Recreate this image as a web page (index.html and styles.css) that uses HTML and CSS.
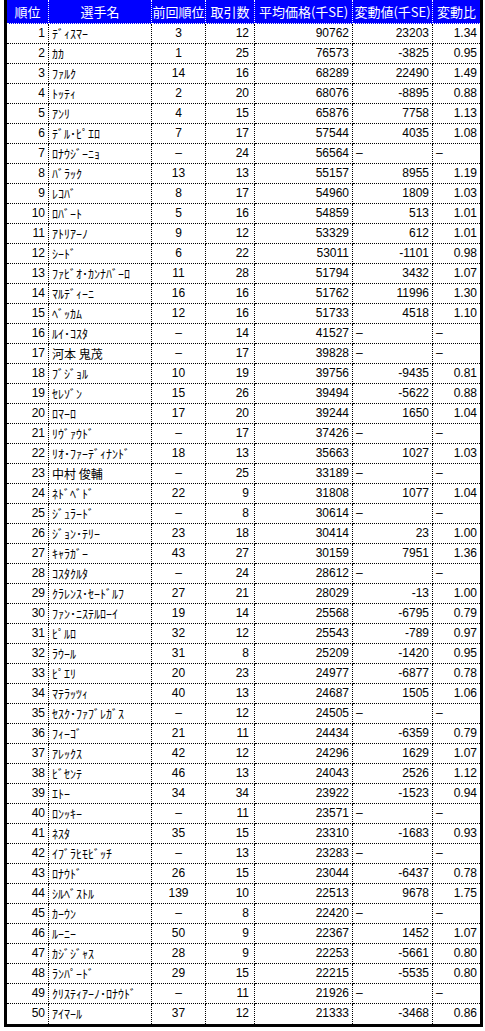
FILE: index.html
```html
<!DOCTYPE html>
<html lang="ja">
<head>
<meta charset="utf-8">
<title>選手ランキング</title>
<link rel="stylesheet" href="styles.css">
</head>
<body>
<div class="sheet">
  <div class="row head">
    <div class="c">順位</div><div class="c">選手名</div><div class="c">前回順位</div><div class="c">取引数</div><div class="c">平均価格(千SE)</div><div class="c">変動値(千SE)</div><div class="c">変動比</div>
  </div>
</div>
<script src="data.js"></script>
</body>
</html>
```
FILE: data.js
```js
const rows = [
["ﾃﾞｨｽﾏｰ","3","12","90762","23203","1.34"],
["ｶｶ","1","25","76573","-3825","0.95"],
["ﾌｧﾙｸ","14","16","68289","22490","1.49"],
["ﾄｯﾃｨ","2","20","68076","-8895","0.88"],
["ｱﾝﾘ","4","15","65876","7758","1.13"],
["ﾃﾞﾙ･ﾋﾟｴﾛ","7","17","57544","4035","1.08"],
["ﾛﾅｳｼﾞｰﾆｮ","-","24","56564","-","-"],
["ﾊﾞﾗｯｸ","13","13","55157","8955","1.19"],
["ﾚｺﾊﾞ","8","17","54960","1809","1.03"],
["ﾛﾊﾞｰﾄ","5","16","54859","513","1.01"],
["ｱﾄﾘｱｰﾉ","9","12","53329","612","1.01"],
["ｼｰﾄﾞ","6","22","53011","-1101","0.98"],
["ﾌｧﾋﾞｵ･ｶﾝﾅﾊﾞｰﾛ","11","28","51794","3432","1.07"],
["ﾏﾙﾃﾞｨｰﾆ","16","16","51762","11996","1.30"],
["ﾍﾞｯｶﾑ","12","16","51733","4518","1.10"],
["ﾙｲ･ｺｽﾀ","-","14","41527","-","-"],
["河本 鬼茂","-","17","39828","-","-"],
["ﾌﾞｼﾞｮﾙ","10","19","39756","-9435","0.81"],
["ｾﾚｿﾞﾝ","15","26","39494","-5622","0.88"],
["ﾛﾏｰﾛ","17","20","39244","1650","1.04"],
["ﾘｳﾞｧｳﾄﾞ","-","17","37426","-","-"],
["ﾘｵ･ﾌｧｰﾃﾞｨﾅﾝﾄﾞ","18","13","35663","1027","1.03"],
["中村 俊輔","-","25","33189","-","-"],
["ﾈﾄﾞﾍﾞﾄﾞ","22","9","31808","1077","1.04"],
["ｼﾞｭﾗｰﾄﾞ","-","8","30614","-","-"],
["ｼﾞｮﾝ･ﾃﾘｰ","23","18","30414","23","1.00"],
["ｷｬﾗｶﾞｰ","43","27","30159","7951","1.36"],
["ｺｽﾀｸﾙﾀ","-","24","28612","-","-"],
["ｸﾗﾚﾝｽ･ｾｰﾄﾞﾙﾌ","27","21","28029","-13","1.00"],
["ﾌｧﾝ･ﾆｽﾃﾙﾛｰｲ","19","14","25568","-6795","0.79"],
["ﾋﾟﾙﾛ","32","12","25543","-789","0.97"],
["ﾗｳｰﾙ","31","8","25209","-1420","0.95"],
["ﾋﾟｴﾘ","20","23","24977","-6877","0.78"],
["ﾏﾃﾗｯﾂｨ","40","13","24687","1505","1.06"],
["ｾｽｸ･ﾌｧﾌﾞﾚｶﾞｽ","-","12","24505","-","-"],
["ﾌｨｰｺﾞ","21","11","24434","-6359","0.79"],
["ｱﾚｯｸｽ","42","12","24296","1629","1.07"],
["ﾋﾞｾﾝﾃ","46","13","24043","2526","1.12"],
["ｴﾄｰ","34","34","23922","-1523","0.94"],
["ﾛﾝｯｷｰ","-","11","23571","-","-"],
["ﾈｽﾀ","35","15","23310","-1683","0.93"],
["ｲﾌﾞﾗﾋﾓﾋﾞｯﾁ","-","13","23283","-","-"],
["ﾛﾅｳﾄﾞ","26","15","23044","-6437","0.78"],
["ｼﾙﾍﾞｽﾄﾙ","139","10","22513","9678","1.75"],
["ｶｰｳﾝ","-","8","22420","-","-"],
["ﾙｰﾆｰ","50","9","22367","1452","1.07"],
["ｶｼﾞｼﾞｬｽ","28","9","22253","-5661","0.80"],
["ﾗﾝﾊﾟｰﾄﾞ","29","15","22215","-5535","0.80"],
["ｸﾘｽﾃｨｱｰﾉ･ﾛﾅｳﾄﾞ","-","11","21926","-","-"],
["ｱｲﾏｰﾙ","37","12","21333","-3468","0.86"]
];
const sheet = document.querySelector('.sheet');
rows.forEach((r, i) => {
  const row = document.createElement('div');
  row.className = 'row';
  const vals = [String(i + 1), ...r];
  const cls = ['num', 'name', 'prev', 'cnt', 'num', 'num', 'num'];
  vals.forEach((v, j) => {
    const c = document.createElement('div');
    let k = 'c ' + cls[j];
    let t = v;
    if (v === '-') {
      t = '\u2013';
      if (j === 5 || j === 6) k = 'c dash';
    }
    c.className = k;
    c.textContent = t;
    row.appendChild(c);
  });
  sheet.appendChild(row);
});
```
FILE: styles.css
```css
html, body {
  margin: 0;
  padding: 0;
  background: #ffffff;
}
body {
  padding-left: 4px;
  font-family: "Liberation Sans Narrow", "Liberation Sans", "Noto Sans CJK JP", sans-serif;
  font-size: 12px;
  color: #000;
}
.sheet {
  width: 479px;
  box-sizing: border-box;
  border: 3px solid #000;
  border-top: 0;
}
.row {
  display: grid;
  grid-template-columns: 42px 103px 54px 49px 98px 80px 47px;
  height: 20px;
}
.c {
  box-sizing: border-box;
  border-right: 1px dotted #000;
  border-bottom: 1px dotted #000;
  line-height: 19px;
  white-space: nowrap;
  overflow: hidden;
}
.c:last-child {
  border-right: 0;
}
.row:last-child .c {
  border-bottom: 0;
}
.head {
  height: 24px;
  background: #0000ff;
}
.head .c {
  color: #fff;
  border-color: #fff;
  font-family: "Noto Sans CJK JP", sans-serif;
  font-size: 13px;
  line-height: 23px;
  text-align: center;
}
.num {
  text-align: right;
  padding-right: 3px;
}
.name {
  text-align: left;
  padding-left: 3px;
  font-family: "Noto Sans CJK JP", sans-serif;
}
.prev {
  text-align: center;
}
.cnt {
  text-align: right;
  padding-right: 5px;
}
.dash {
  text-align: left;
  padding-left: 3px;
}
```
